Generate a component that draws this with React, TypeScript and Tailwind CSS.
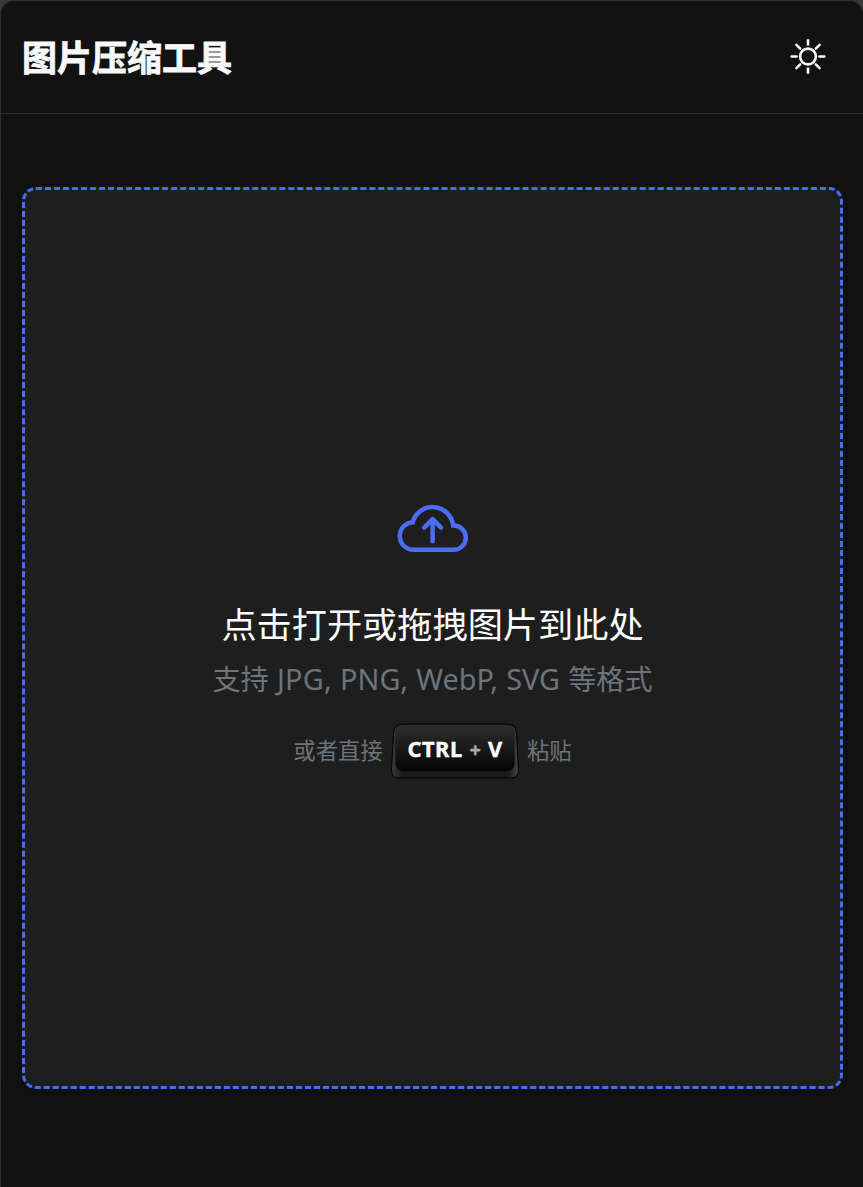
function SunIcon() {
  return (
    <svg className="h-9 w-9" viewBox="0 0.5 36 36" fill="none" stroke="#f8f9fa" strokeWidth="2.6">
      <circle cx="18" cy="18" r="7.900" />
      <path d="M18 .7v6.4M18 28.9v6.4" />
      <path strokeLinecap="round" d="M1.6 18h5M29.4 18h5M6.4 6.4l3.8 3.8M29.6 6.4l-3.8 3.8M6.4 29.6l3.8-3.8M29.6 29.6l-3.8-3.8" />
    </svg>
  );
}

function CloudIcon() {
  return (
    <svg className="h-[50px] w-[72px] shrink-0" viewBox="396.7 503 72 50" fill="none" stroke="#4a6cf7" strokeWidth="4.5">
      <path d="M414.6 522.2H413.2A13.8 13.8 0 0 0 413.2 549.8H453.4A12.1 12.1 0 0 0 453.4 525.6H450.8" />
      <path d="M452.9 526.8A20.7 20.7 0 0 0 412.3 523.4" transform="translate(0 -1)" />
      <path strokeLinecap="round" strokeLinejoin="round" d="M432.3 541.2V519.2M423.9 527.6L432.3 519.2L440.7 527.6" />
    </svg>
  );
}

function Shortcut() {
  return (
    <kbd className="relative mx-2 flex h-14 w-32 items-center justify-center font-['Noto_Sans','Noto_Sans_CJK_SC',sans-serif] text-[21.8px] font-bold text-white">
      <svg className="absolute inset-0 h-14 w-32" viewBox="0 0 128 56">
        <defs>
          <linearGradient id="cap" x1="0" y1="0" x2="0" y2="1">
            <stop offset="0" stopColor="#2e2e2e" />
            <stop offset="1" stopColor="#050505" />
          </linearGradient>
          <linearGradient id="side" x1="0" y1="0" x2="1" y2="0">
            <stop offset="0" stopColor="#3c3c3c" />
            <stop offset=".08" stopColor="#1b1b1b" />
            <stop offset=".92" stopColor="#1b1b1b" />
            <stop offset="1" stopColor="#444" />
          </linearGradient>
        </defs>
        <path d="M12 1H116Q125 1 125.500 10L127.500 47Q127.500 55 120 55H8Q.5 55 .5 47L2.500 10Q3 1 12 1Z" fill="url(#side)" stroke="#000" />
        <rect x="4.500" y="2" width="119" height="46" rx="7" fill="url(#cap)" />
      </svg>
      <span className="relative -top-[2.500px] flex items-center gap-[7px] [-webkit-text-stroke:0.4px_white]">
        <span className="tracking-[0.5px]">CTRL</span>
        <span className="pt-[3px] text-[20px] text-[#aaa] [-webkit-text-stroke:0.3px_#aaa]">+</span>
        <span>V</span>
      </span>
    </kbd>
  );
}

export default function App() {
  return (
    <div className="h-[1187px] w-[863px] bg-[#3a3a3a] font-['Noto_Sans','Noto_Sans_CJK_SC',sans-serif]">
      <main className="flex h-full flex-col overflow-hidden rounded-t-[14px] border-t border-l border-[#303030] bg-[#121212]">
        <header className="flex h-[113px] shrink-0 items-center justify-between border-b border-[#2d2d2d] pr-[37px] pl-[21px]">
          <h1 className="text-[35px] leading-none font-bold text-[#f8f9fa] [-webkit-text-stroke:0.8px_#f8f9fa]">图片压缩工具</h1>
          <button aria-label="切换主题"><SunIcon /></button>
        </header>
        <section className="mt-[73px] ml-[21px] flex h-[902px] w-[821px] shrink-0 flex-col items-center rounded-[14px] border-[3px] border-dashed border-[#4a6cf7] bg-[#1e1e1e] pt-[313px] shadow-[0_4px_20px_rgba(0,0,0,0.2)]">
          <CloudIcon />
          <p className="mt-[45px] text-[35.2px] leading-[52px] text-white">点击打开或拖拽图片到此处</p>
          <p className="mt-[8px] text-[28.1px] leading-[42px] text-[#6c757d]">支持<span className="text-[28.8px] [word-spacing:0.8px]"> <span className="tracking-[0.3px]">JPG</span>, PNG, WebP, SVG </span>等格式</p>
          <div className="mt-[23px] flex items-center text-[22.4px] leading-none text-[#6c757d]">
            <span>或者直接</span><Shortcut /><span>粘贴</span>
          </div>
        </section>
      </main>
    </div>
  );
}
